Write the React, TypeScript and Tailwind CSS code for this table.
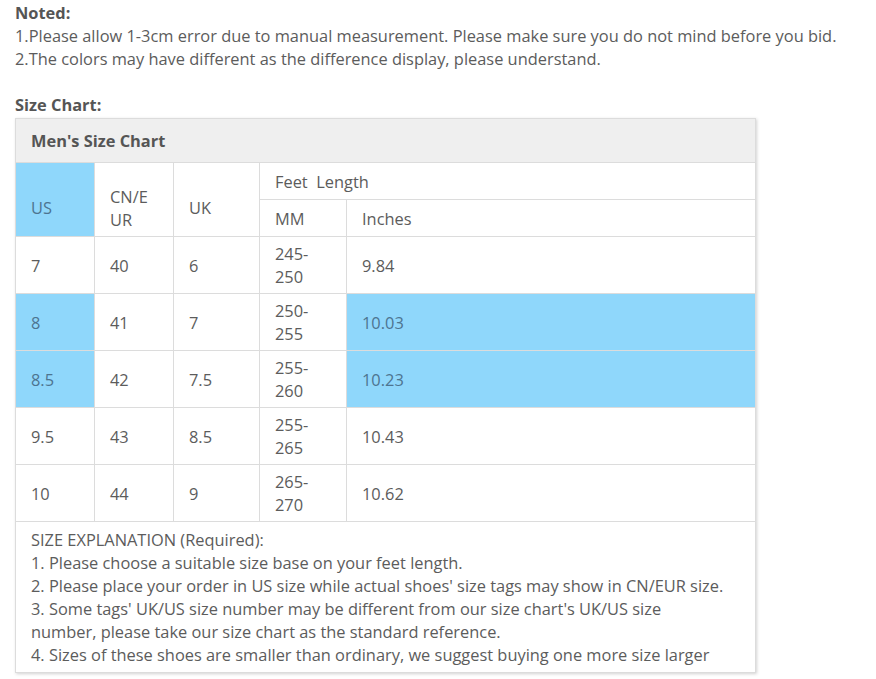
const rows = [
  { us: "7", eu: "40", uk: "6", mm: "245-250", inch: "9.84", hi: false },
  { us: "8", eu: "41", uk: "7", mm: "250-255", inch: "10.03", hi: true },
  { us: "8.5", eu: "42", uk: "7.5", mm: "255-260", inch: "10.23", hi: true },
  { us: "9.5", eu: "43", uk: "8.5", mm: "255-265", inch: "10.43", hi: false },
  { us: "10", eu: "44", uk: "9", mm: "265-270", inch: "10.62", hi: false },
];

const cell = "border border-[#dcdcdc] pl-[15px] pr-4 py-[5px] align-middle";
const blue = "bg-[#8fd7fb] text-[#4d7490]";
// the first three header cells sit a little low in the source picture
const low = "pt-[21px] pb-[5px]";

export default function App() {
  return (
    <div className="min-h-[679px] bg-white px-[15px] pt-[1px] font-['Open_Sans',sans-serif] text-[16.4px] leading-[23px] text-[#5c5c5c]">
      <div className="font-bold text-[#555]">Noted:</div>
      <div>1.Please allow 1-3cm error due to manual measurement. Please make sure you do not mind before you bid.</div>
      <div>2.The colors may have different as the difference display, please understand.</div>
      <div className="mt-[23px] font-bold text-[#555]">Size Chart:</div>

      <table className="mt-[2px] w-[741px] table-fixed border-collapse shadow-[1px_1px_3px_rgba(0,0,0,0.18)]">
        <colgroup>
          <col className="w-[79px]" />
          <col className="w-[79px]" />
          <col className="w-[86px]" />
          <col className="w-[87px]" />
          <col />
        </colgroup>
        <tbody>
          <tr className="h-[44px]">
            <td colSpan={5} className={`${cell} bg-[#efefef] font-bold text-[#555]`}>
              Men's Size Chart
            </td>
          </tr>
          <tr className="h-[37px]">
            <td rowSpan={2} className={`${cell} ${low} ${blue}`}>US</td>
            <td rowSpan={2} className={`${cell} ${low} break-all`}>CN/EUR</td>
            <td rowSpan={2} className={`${cell} ${low}`}>UK</td>
            <td colSpan={2} className={cell}>Feet&nbsp; Length</td>
          </tr>
          <tr className="h-[37px]">
            <td className={cell}>MM</td>
            <td className={cell}>Inches</td>
          </tr>
          {rows.map((r) => (
            <tr key={r.us} className="h-[57px]">
              <td className={`${cell} ${r.hi ? blue : ""}`}>{r.us}</td>
              <td className={cell}>{r.eu}</td>
              <td className={cell}>{r.uk}</td>
              <td className={cell}>{r.mm}</td>
              <td className={`${cell} ${r.hi ? blue : ""}`}>{r.inch}</td>
            </tr>
          ))}
          <tr>
            <td colSpan={5} className={`${cell} py-[6px]`}>
              <div>SIZE EXPLANATION (Required):</div>
              <div>1. Please choose a suitable size base on your feet length.</div>
              <div>2. Please place your order in US size while actual shoes' size tags may show in CN/EUR size.</div>
              <div>
                3. Some tags' UK/US size number may be different from our size chart's UK/US size
                <br />
                number, please take our size chart as the standard reference.
              </div>
              <div>4. Sizes of these shoes are smaller than ordinary, we suggest buying one more size larger</div>
            </td>
          </tr>
        </tbody>
      </table>
    </div>
  );
}
